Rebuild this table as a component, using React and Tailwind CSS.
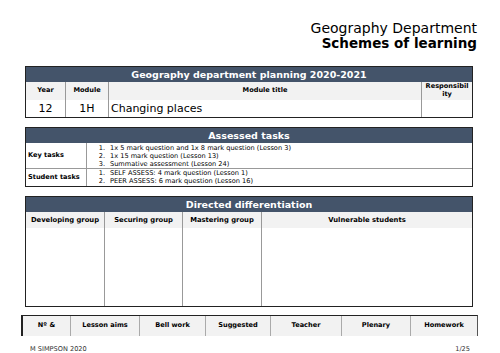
export default function App() {
  const font = { fontFamily: '"DejaVu Sans", "Liberation Sans", sans-serif' };

  return (
    <div className="relative w-[500px] h-[353px] overflow-hidden bg-white text-black" style={font}>
      {/* header */}
      <div className="pt-[20px] pr-[23px] text-right">
        <div className="text-[14px] leading-[16px]">Geography Department</div>
        <div className="text-[13.5px] leading-[15px] font-bold">Schemes of learning</div>
      </div>

      {/* planning */}
      <div className="mx-[25px] mt-[15px] w-[448px] border border-[#222]">
        <div className="h-[15px] bg-[#44546a] text-white text-[9.5px] font-bold leading-[15px] text-center">
          Geography department planning 2020-2021
        </div>
        <div className="grid grid-cols-[40px_43px_313px_1fr] bg-[#f2f2f2] h-[18px] text-[6.6px] font-bold">
          <div className="flex items-center justify-center border-r border-[#999]">Year</div>
          <div className="flex items-center justify-center border-r border-[#999]">Module</div>
          <div className="flex items-center justify-center border-r border-[#999]">Module title</div>
          <div className="text-center leading-[7.5px] pt-[1px]">Responsibil<br />ity</div>
        </div>
        <div className="grid grid-cols-[40px_43px_313px_1fr] h-[17px] text-[11px] leading-[17px]">
          <div className="text-center border-r border-[#999]">12</div>
          <div className="text-center border-r border-[#999]">1H</div>
          <div className="pl-[2px] border-r border-[#999]">Changing places</div>
          <div></div>
        </div>
      </div>

      {/* assessed tasks */}
      <div className="mx-[25px] mt-[9px] w-[448px] border border-[#222]">
        <div className="h-[15px] bg-[#44546a] text-white text-[9.5px] font-bold leading-[15px] text-center">
          Assessed tasks
        </div>
        <div className="grid grid-cols-[61px_1fr] border-b border-[#999] h-[26px]">
          <div className="flex items-center pl-[2px] text-[6.6px] font-bold border-r border-[#999]">Key tasks</div>
          <ol className="text-[6.6px] leading-[8.2px] pt-[1px]">
            <li className="flex"><span className="w-[23px] text-right pr-[5px]">1.</span>1x 5 mark question and 1x 8 mark question (Lesson 3)</li>
            <li className="flex"><span className="w-[23px] text-right pr-[5px]">2.</span>1x 15 mark question (Lesson 13)</li>
            <li className="flex"><span className="w-[23px] text-right pr-[5px]">3.</span>Summative assessment (Lesson 24)</li>
          </ol>
        </div>
        <div className="grid grid-cols-[61px_1fr] h-[17px]">
          <div className="flex items-center pl-[2px] text-[6.6px] font-bold border-r border-[#999]">Student tasks</div>
          <ol className="text-[6.6px] leading-[8.2px]">
            <li className="flex"><span className="w-[23px] text-right pr-[5px]">1.</span>SELF ASSESS: 4 mark question (Lesson 1)</li>
            <li className="flex"><span className="w-[23px] text-right pr-[5px]">2.</span>PEER ASSESS: 6 mark question (Lesson 16)</li>
          </ol>
        </div>
      </div>

      {/* differentiation */}
      <div className="mx-[25px] mt-[9px] w-[448px] border border-[#222]">
        <div className="h-[15px] bg-[#44546a] text-white text-[9.5px] font-bold leading-[15px] text-center">
          Directed differentiation
        </div>
        <div className="grid grid-cols-[79px_78px_79px_1fr] h-[94px] text-[6.8px] font-bold">
          {['Developing group', 'Securing group', 'Mastering group', 'Vulnerable students'].map((t, i) => (
            <div key={t} className={i < 3 ? 'border-r border-[#999]' : ''}>
              <div className="h-[16px] bg-[#f2f2f2] flex items-center justify-center">{t}</div>
            </div>
          ))}
        </div>
      </div>

      {/* lessons */}
      <div className="ml-[21px] mt-[8px] w-[457px] h-[21px] border-t border-[#222] border-l-2 border-l-[#222] border-r border-r-[#555] bg-[#f2f2f2] grid grid-cols-[48px_69px_66px_65px_71px_69px_1fr] text-[6.6px] font-bold">
          {['Nº &', 'Lesson aims', 'Bell work', 'Suggested', 'Teacher', 'Plenary', 'Homework'].map((t, i) => (
            <div key={t} className={`flex items-center justify-center ${i < 6 ? 'border-r border-[#aaa]' : ''}`}>{t}</div>
          ))}
      </div>

      {/* footer */}
      <div className="flex justify-between px-[30px] mt-[9px] text-[6.6px] text-[#333]">
        <span>M SIMPSON 2020</span>
        <span>1/25</span>
      </div>
    </div>
  );
}
